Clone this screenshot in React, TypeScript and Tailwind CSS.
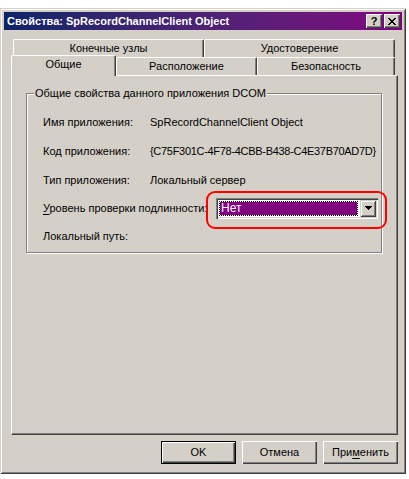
import React from "react";

const face = "bg-[#d4d0c8]";

function CloseGlyph() {
  const rows: [number, number][][] = [
    [[0, 2], [6, 2]],
    [[1, 2], [5, 2]],
    [[2, 4]],
    [[3, 2]],
    [[2, 4]],
    [[1, 2], [5, 2]],
    [[0, 2], [6, 2]],
  ];
  return (
    <svg width="8" height="7" viewBox="0 0 8 7" shapeRendering="crispEdges">
      {rows.map((r, y) =>
        r.map(([x, w], i) => <rect key={`${y}-${i}`} x={x} y={y} width={w} height={1} fill="#000" />)
      )}
    </svg>
  );
}

function Tab({ label, className }: { label: string; className: string }) {
  return (
    <div
      className={
        "flex items-center justify-center whitespace-nowrap border-t border-l border-r border-t-white border-l-white border-r-[#404040] rounded-tl-[2px] rounded-tr-[2px] shadow-[inset_-1px_0_0_#808080] " +
        className
      }
    >
      {label}
    </div>
  );
}

function Row({ label, value, h, valueClass }: { label: React.ReactNode; value?: string; h: string; valueClass?: string }) {
  return (
    <div className={"flex items-center " + h}>
      <div className="w-[107px] whitespace-nowrap">{label}</div>
      {value && <div className={"whitespace-nowrap " + (valueClass ?? "")}>{value}</div>}
    </div>
  );
}

export default function App() {
  return (
    <div className="w-[409px] h-[479px] bg-white pt-[8px] overflow-hidden font-['Liberation_Sans',Arial,sans-serif] text-[11px] text-black">
      <div
        className={
          "w-[406px] h-[466px] p-[4px] flex flex-col " +
          face +
          " shadow-[inset_1px_1px_0_#d4d0c8,inset_-1px_-1px_0_#404040,inset_2px_2px_0_#ffffff,inset_-2px_-2px_0_#808080]"
        }
      >
        {/* Title bar */}
        <div className="h-[18px] flex items-center pl-[3px] pr-[2px] bg-linear-to-r from-[#0a246a] to-[#800080]">
          <div className="flex-1 text-white font-bold text-[11px] whitespace-nowrap leading-[18px]">
            Свойства: SpRecordChannelClient Object
          </div>
          <div className="flex gap-[2px]">
            <div className="w-[16px] h-[14px] bg-[#d4d0c8] flex items-center justify-center font-bold text-[11px] leading-none shadow-[inset_1px_1px_0_#ffffff,inset_-1px_-1px_0_#404040,inset_-2px_-2px_0_#808080]">
              ?
            </div>
            <div className="w-[16px] h-[14px] bg-[#d4d0c8] flex items-center justify-center shadow-[inset_1px_1px_0_#ffffff,inset_-1px_-1px_0_#404040,inset_-2px_-2px_0_#808080]">
              <CloseGlyph />
            </div>
          </div>
        </div>

        {/* Tabs + panel */}
        <div className="ml-[7px] w-[387px] mt-[9px] flex flex-col">
          <div className="flex h-[18px] pl-[2px]">
            <Tab label="Конечные узлы" className="w-[191px] h-[18px]" />
            <Tab label="Удостоверение" className="w-[191px] h-[18px]" />
          </div>
          <div className="flex h-[18px] items-start">
            <Tab
              label="Общие"
              className="w-[105px] h-[21px] -mt-[2px] pb-[3px] relative z-10 bg-[#d4d0c8]"
            />
            <Tab label="Расположение" className="w-[141px] h-[18px]" />
            <Tab label="Безопасность" className="w-[138px] h-[18px]" />
          </div>
          <div className="h-[360px] border border-t-white border-l-white border-r-[#404040] border-b-[#404040] shadow-[inset_-1px_-1px_0_#808080] pt-[17px] pl-[14px]">
            {/* Group box */}
            <div className="relative w-[356px] h-[160px] border border-[#808080] shadow-[inset_1px_1px_0_#ffffff,1px_1px_0_#ffffff]">
              <div className="absolute left-[7px] -top-[8px] px-[1px] bg-[#d4d0c8] leading-[14px] whitespace-nowrap">
                Общие свойства данного приложения DCOM
              </div>
              <div className="pt-[14px] pl-[16px] flex flex-col">
                <Row label="Имя приложения:" value="SpRecordChannelClient Object" h="h-[29px]" />
                <Row
                  label="Код приложения:"
                  value="{C75F301C-4F78-4CBB-B438-C4E37B70AD7D}"
                  h="h-[29px]"
                  valueClass="tracking-[-0.3px]"
                />
                <Row label="Тип приложения:" value="Локальный сервер" h="h-[28px]" />
                <div className="flex items-center h-[28px]">
                  <div className="w-[173px] whitespace-nowrap">
                    <span className="underline underline-offset-[2px]">У</span>ровень проверки подлинности:
                  </div>
                  <div className="relative">
                    <div className="w-[162px] h-[21px] bg-white p-[2px] flex shadow-[inset_1px_1px_0_#808080,inset_2px_2px_0_#404040,inset_-1px_-1px_0_#ffffff,inset_-2px_-2px_0_#d4d0c8]">
                      <div className="flex-1 m-[1px] mr-[2px] bg-[#800080] bg-clip-padding border border-dotted border-black text-white text-[12px] flex items-center pl-[1px] leading-none">
                        Нет
                      </div>
                      <div className="w-[16px] h-full bg-[#d4d0c8] flex items-center justify-center shadow-[inset_1px_1px_0_#d4d0c8,inset_-1px_-1px_0_#404040,inset_2px_2px_0_#ffffff,inset_-2px_-2px_0_#808080]">
                        <svg width="7" height="4" viewBox="0 0 7 4" shapeRendering="crispEdges">
                          <rect x="0" y="0" width="7" height="1" fill="#000" />
                          <rect x="1" y="1" width="5" height="1" fill="#000" />
                          <rect x="2" y="2" width="3" height="1" fill="#000" />
                          <rect x="3" y="3" width="1" height="1" fill="#000" />
                        </svg>
                      </div>
                    </div>
                    <div className="absolute -left-[10px] -top-[7px] -right-[9px] -bottom-[10px] border-2 border-[#ff0000] rounded-[9px] pointer-events-none" />
                  </div>
                </div>
                <Row label="Локальный путь:" h="h-[28px]" />
              </div>
            </div>
          </div>

          {/* Buttons */}
          <div className="flex justify-end gap-[6px] mt-[6px]">
            <div className="w-[75px] h-[23px] border border-black flex items-center justify-center shadow-[inset_1px_1px_0_#ffffff,inset_-1px_-1px_0_#404040,inset_-2px_-2px_0_#808080]">
              OK
            </div>
            <div className="w-[75px] h-[23px] flex items-center justify-center shadow-[inset_1px_1px_0_#ffffff,inset_-1px_-1px_0_#404040,inset_-2px_-2px_0_#808080]">
              Отмена
            </div>
            <div className="w-[75px] h-[23px] flex items-center justify-center shadow-[inset_1px_1px_0_#ffffff,inset_-1px_-1px_0_#404040,inset_-2px_-2px_0_#808080]">
              При<span className="underline underline-offset-[2px]">м</span>енить
            </div>
          </div>
        </div>
      </div>
    </div>
  );
}
